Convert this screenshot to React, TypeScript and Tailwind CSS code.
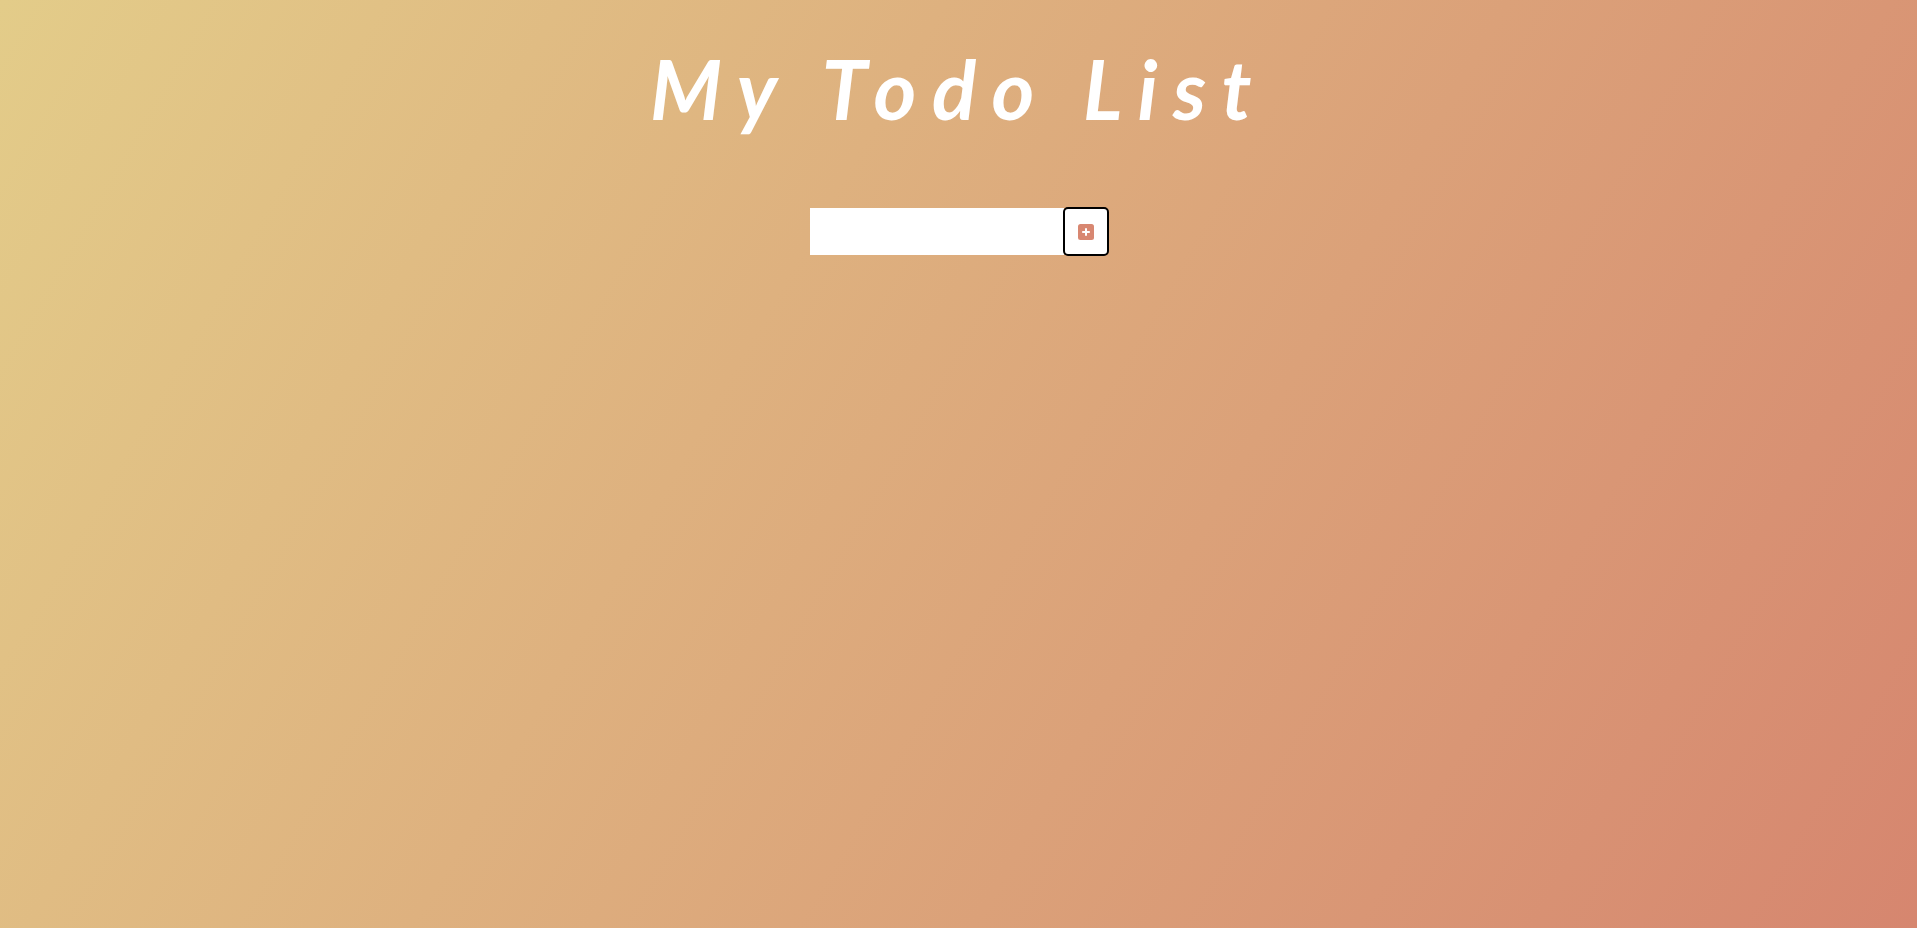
import React, { useState } from 'react'

const PlusSquare = () => (
  <svg width="16" height="16" viewBox="0 0 16 16" aria-hidden="true">
    <rect x="0" y="0" width="16" height="16" rx="2.5" fill="#d88771" />
    <path d="M8 4.2v7.6M4.2 8h7.6" stroke="#fff" strokeWidth="2" />
  </svg>
)

export default function App() {
  const [text, setText] = useState('')

  return (
    <div className="min-h-screen w-full bg-[linear-gradient(120deg,#e3cc89,#d6866f)]">
      <header className="flex justify-center pt-[38px]">
        <h1 className="font-['Lato','Liberation_Sans',sans-serif] text-[82px] leading-[100px] font-bold italic tracking-[0.187em] text-white">
          My Todo List
        </h1>
      </header>

      <form
        className="mt-[70px] flex justify-center"
        onSubmit={(e) => e.preventDefault()}
      >
        <input
          type="text"
          value={text}
          onChange={(e) => setText(e.target.value)}
          className="h-[47px] w-[254px] bg-white px-2 text-2xl outline-none"
        />
        <button
          type="submit"
          className="flex h-[47px] w-[44px] items-center justify-center rounded-[4px] bg-white outline-2 outline-offset-[-1px] outline-black"
        >
          <PlusSquare />
        </button>
      </form>
    </div>
  )
}
